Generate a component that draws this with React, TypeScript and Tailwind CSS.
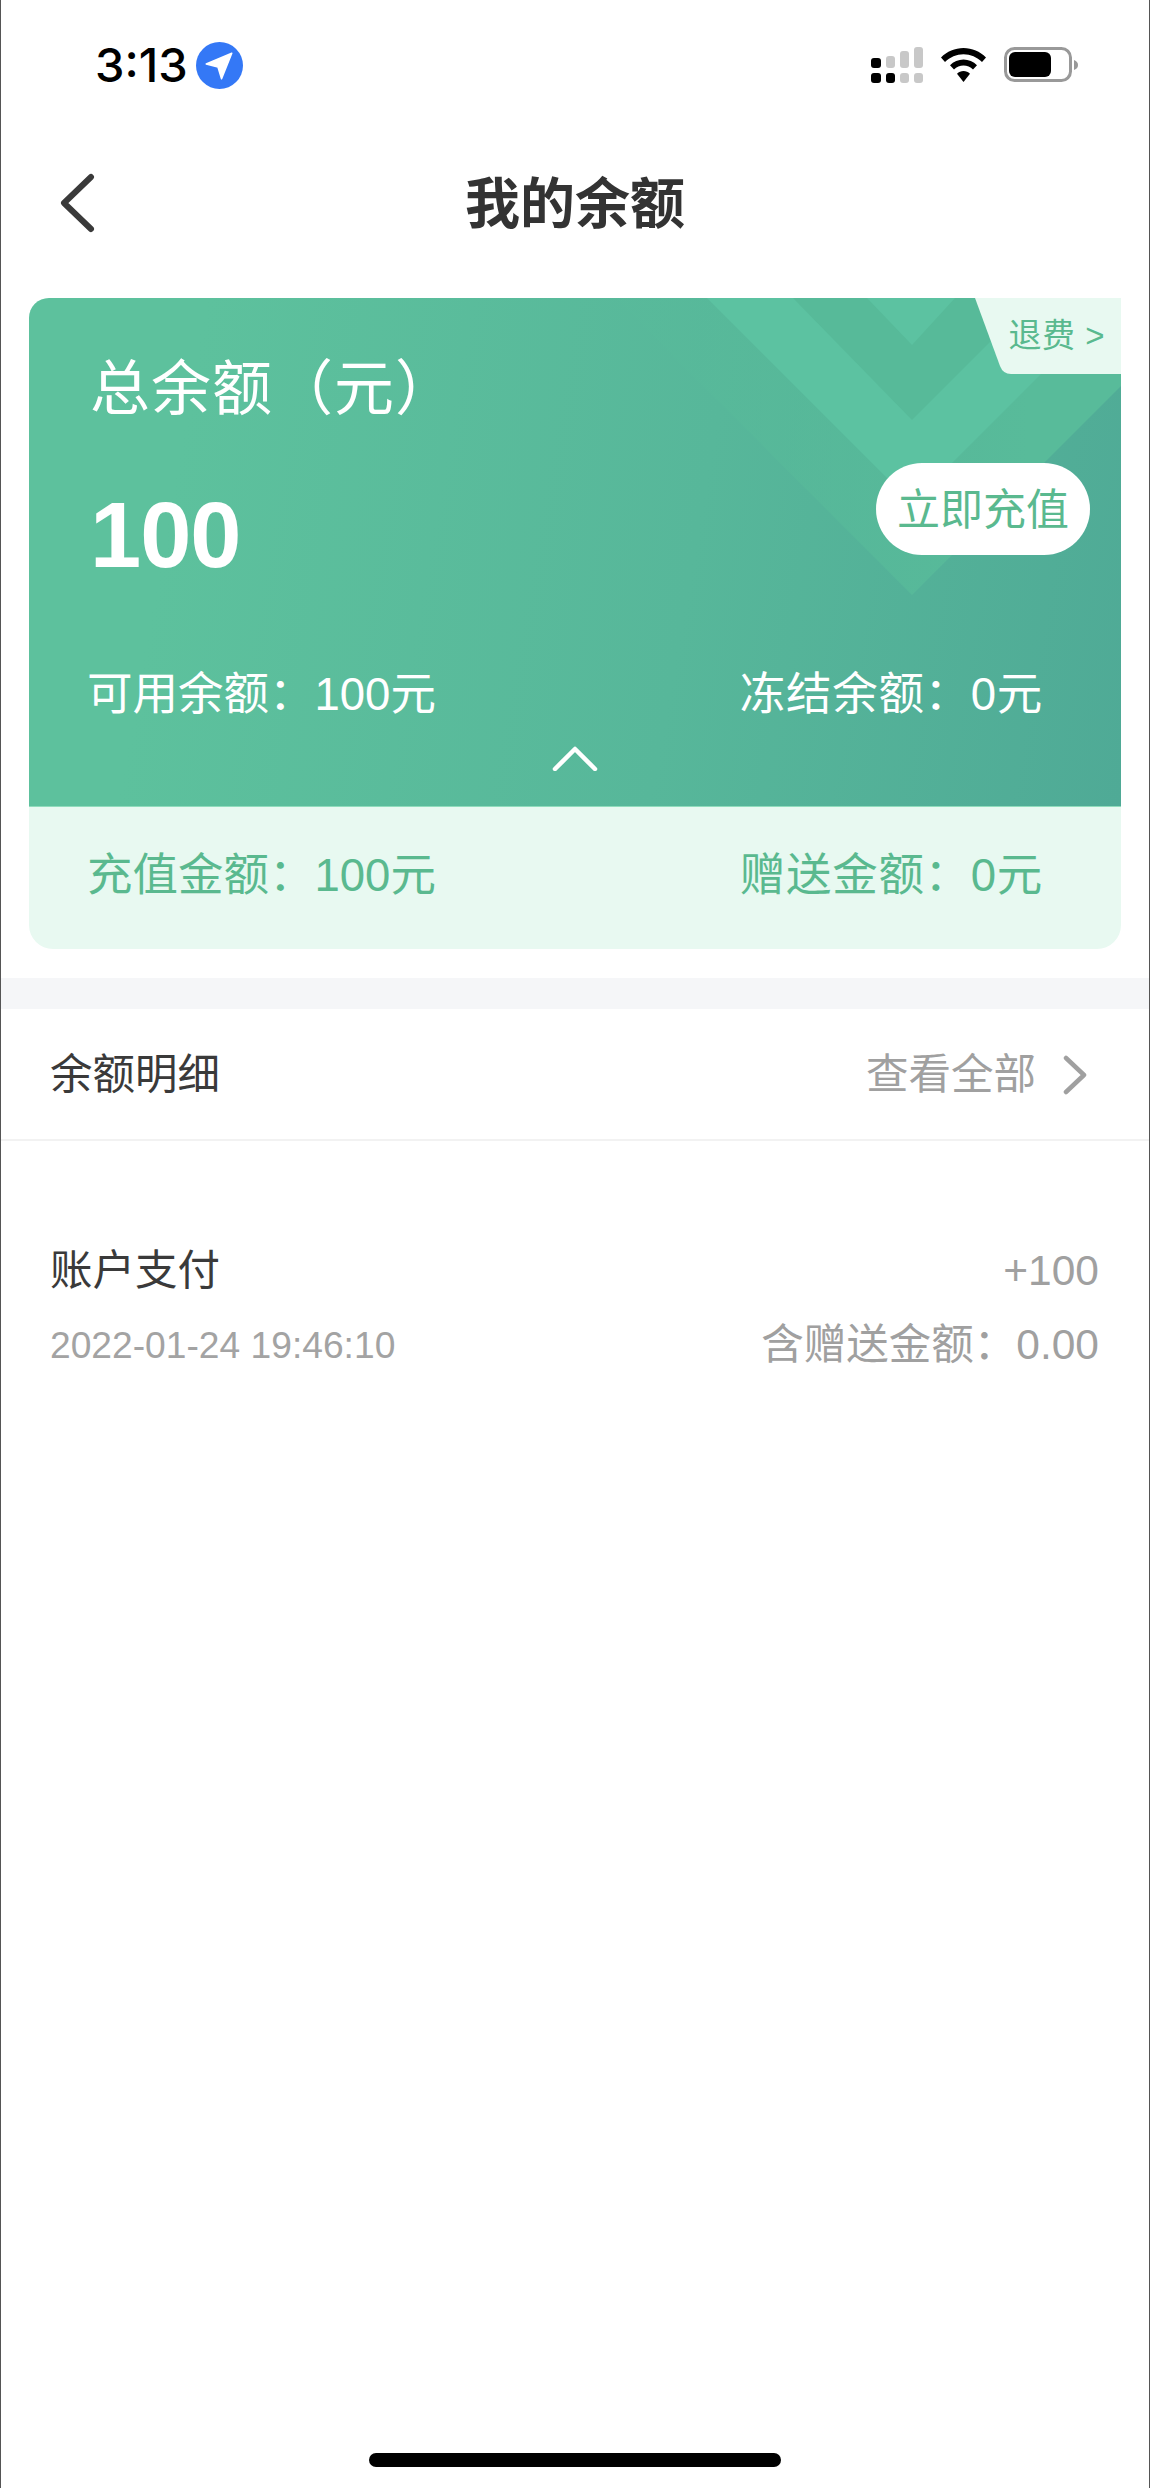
const fontStack = "font-['Liberation_Sans','Noto_Sans_CJK_SC',sans-serif]";

function StatusBar() {
  return (
    <div className="flex h-[130px] items-center justify-between pl-[94px] pr-[71px]">
      <div className="flex items-center gap-[8px]">
        <span className="font-['Inter',sans-serif] text-[47px] leading-[50px] font-medium text-black">3:13</span>
        <svg width="47" height="47" viewBox="0 0 46 46">
          <circle cx="23" cy="23" r="23" fill="#3478f6" />
          <path d="M35 11 L10 21.5 L21.5 24.5 L25 36 Z" fill="#fff" stroke="#fff" strokeWidth="1.5" strokeLinejoin="round" />
        </svg>
      </div>
      <div className="flex items-center gap-[18px]">
        <svg width="52" height="36" viewBox="0 0 52 36">
          <rect x="0" y="11" width="10" height="10" rx="3" fill="#000" />
          <rect x="15" y="9" width="9" height="12" rx="3" fill="#c8c8c8" />
          <rect x="29" y="4" width="9" height="17" rx="3" fill="#c8c8c8" />
          <rect x="43" y="0" width="9" height="21" rx="3" fill="#c8c8c8" />
          <rect x="0" y="26" width="10" height="10" rx="3" fill="#000" />
          <rect x="15" y="26" width="9" height="10" rx="3" fill="#000" />
          <rect x="29" y="26" width="9" height="10" rx="3" fill="#c8c8c8" />
          <rect x="43" y="26" width="9" height="10" rx="3" fill="#c8c8c8" />
        </svg>
        <svg width="45" height="34" viewBox="0 0 45 34">
          <path d="M22.5 0 C31 0 39 3.5 45 9.5 L41 14 C36 9 29.5 6.2 22.5 6.2 C15.5 6.2 9 9 4 14 L0 9.5 C6 3.5 14 0 22.5 0 Z" fill="#000" />
          <path d="M22.5 11.5 C27.5 11.5 32.5 13.6 36 17.3 L32 21.6 C29.5 19 26 17.6 22.5 17.6 C19 17.6 15.5 19 13 21.6 L9 17.3 C12.5 13.6 17.5 11.5 22.5 11.5 Z" fill="#000" />
          <path d="M22.5 23 C25 23 27.2 24 29 25.7 L22.5 34 L16 25.7 C17.8 24 20 23 22.5 23 Z" fill="#000" />
        </svg>
        <svg width="74" height="36" viewBox="0 0 74 36">
          <rect x="1.5" y="1.5" width="65" height="32" rx="9" fill="none" stroke="#999" strokeWidth="3" />
          <rect x="5" y="5" width="42" height="25" rx="6" fill="#000" />
          <path d="M70 13 C73 14 74 16 74 18 C74 20 73 22 70 23 Z" fill="#999" />
        </svg>
      </div>
    </div>
  );
}

function NavBar() {
  return (
    <div className="relative flex h-[146px] items-center justify-center">
      <svg className="absolute left-[58px] top-[43px]" width="36" height="60" viewBox="0 0 36 60" fill="none">
        <path d="M32 4 L5 30 L32 56" stroke="#3a3a3a" strokeWidth="6" strokeLinecap="round" strokeLinejoin="round" />
      </svg>
      <h1 className="pt-[2px] text-[55px] leading-[60px] font-semibold text-[#333]">我的余额</h1>
    </div>
  );
}

function CardPattern() {
  return (
    <svg className="absolute inset-0" width="1092" height="508" viewBox="0 0 1092 508">
      <defs>
        <linearGradient id="outerV" x1="586" y1="0" x2="1000" y2="0" gradientUnits="userSpaceOnUse">
          <stop offset="0" stopColor="#58bb9a" stopOpacity="0.2" />
          <stop offset="1" stopColor="#58bb9a" />
        </linearGradient>
      </defs>
      <polygon points="586,0 883,297 1092,88 1092,0" fill="url(#outerV)" />
      <polygon points="678,0 883,205 1088,0" fill="#5cc2a1" />
      <polygon points="764,0 883,122 1005,0" fill="#57ba99" />
      <polygon points="838,0 883,47 926,0" fill="#5cc2a1" />
    </svg>
  );
}

function BalanceCard() {
  return (
    <div className="mx-[28px] mt-[22px] overflow-hidden rounded-t-[20px] rounded-tr-none rounded-b-[24px] bg-[#e8f9f1]">
      <div className="relative h-[509px] border-b border-[#8fdcbc] bg-[linear-gradient(100deg,#5dc19d_15%,#57b79a_60%,#4faa96_100%)]">
        <CardPattern />
        <div className="absolute right-0 top-0 h-[76px] w-[146px]">
          <svg className="absolute inset-0" width="146" height="76" viewBox="0 0 146 76">
            <path d="M0 0 H146 V76 H36 Q28 76 25 68 Z" fill="#e8f9f1" />
          </svg>
          <span className="absolute right-[16px] top-[20px] whitespace-nowrap text-[33px] leading-[36px] tracking-[0.5px] text-[#5ab98f]">退费 &gt;</span>
        </div>
        <div className="relative flex justify-between pl-[61px]">
          <div>
            <div className="mt-[60px] text-[60px] leading-[64px] tracking-[1px] text-white">总余额（元）</div>
            <div className="mt-[67px] text-[92px] leading-[92px] font-bold tracking-[-1px] text-white">100</div>
          </div>
          <button className="mr-[31px] mt-[165px] flex h-[92px] w-[214px] items-center justify-center rounded-full bg-white pt-[2px] text-[43px] text-[#5ab98f]">
            立即充值
          </button>
        </div>
        <div className="relative mt-[91px] flex justify-between pl-[58px] pr-[78px] text-[45.5px] leading-[46px] text-white">
          <span>可用余额：100元</span>
          <span className="tracking-[0.7px]">冻结余额：0元</span>
        </div>
        <div className="relative mt-[27px] flex justify-center">
          <svg width="46" height="26" viewBox="0 0 46 26" fill="none">
            <path d="M3 24 L23 4 L43 24" stroke="#fff" strokeWidth="4.5" strokeLinecap="round" strokeLinejoin="round" />
          </svg>
        </div>
      </div>
      <div className="flex h-[142px] items-center justify-between pb-[4px] pl-[58px] pr-[78px] text-[45.5px] leading-[46px] text-[#5ab98f]">
        <span>充值金额：100元</span>
        <span className="tracking-[0.7px]">赠送金额：0元</span>
      </div>
    </div>
  );
}

function BalanceDetail() {
  return (
    <div>
      <div className="flex h-[132px] items-center justify-between border-b-2 border-[#f2f2f2] pl-[49px] pr-[62px] pt-[2px]">
        <span className="text-[42.5px] leading-[48px] text-[#3a3a3a]">余额明细</span>
        <div className="flex items-center gap-[27px]">
          <span className="text-[42.5px] leading-[48px] text-[#a0a0a0]">查看全部</span>
          <svg width="24" height="40" viewBox="0 0 24 40" fill="none">
            <path d="M3 3 L21 20 L3 37" stroke="#a0a0a0" strokeWidth="4.5" strokeLinecap="round" strokeLinejoin="round" />
          </svg>
        </div>
      </div>
      <div className="flex justify-between pl-[49px] pr-[50px] pt-[106px]">
        <div>
          <div className="text-[42.5px] leading-[48px] text-[#3a3a3a]">账户支付</div>
          <div className="mt-[26px] text-[37.2px] leading-[48px] text-[#a3a3a3]">2022-01-24 19:46:10</div>
        </div>
        <div className="text-right text-[42.5px] leading-[48px] text-[#a0a0a0]">
          <div>+100</div>
          <div className="mt-[26px]">含赠送金额：0.00</div>
        </div>
      </div>
    </div>
  );
}

export default function App() {
  return (
    <div className={`relative h-[2488px] w-[1150px] overflow-hidden border-x border-[#555] bg-white ${fontStack}`}>
      <StatusBar />
      <NavBar />
      <BalanceCard />
      <div className="mt-[29px] h-[31px] bg-[#f5f6f8]" />
      <BalanceDetail />
      {/* home indicator */}
      <div className="absolute bottom-[21px] left-[368px] h-[14px] w-[412px] rounded-[7px] bg-black" />
    </div>
  );
}
